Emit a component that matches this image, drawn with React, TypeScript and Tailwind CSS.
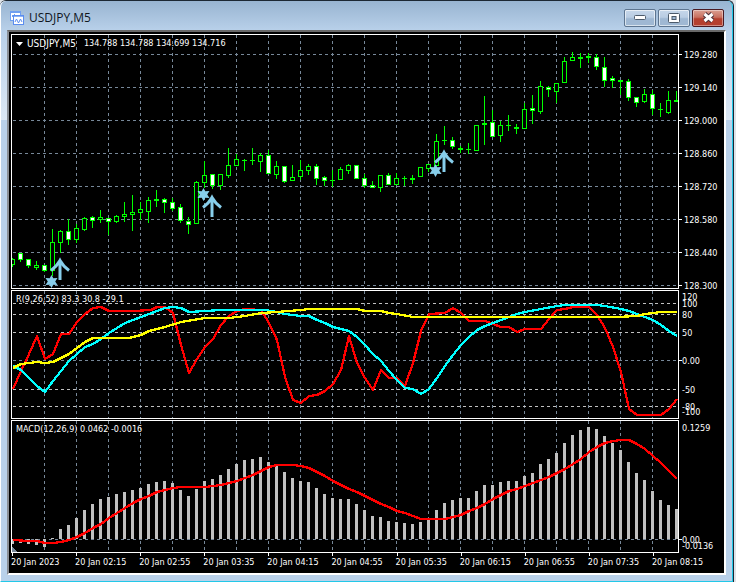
import type { ReactNode } from "react";

type CandleKind = "up" | "down";
// high, body top, body bottom, low, kind
type Candle = [number, number, number, number, CandleKind];
type Point = [number, number];

interface AxisLabel {
  text: string;
  y: number;
  tick?: boolean;
}

interface PanelProps {
  top: number;
  height: number;
  title: ReactNode;
  labels: AxisLabel[];
  indent: string;
  children: ReactNode;
}

const STEP = 8;
const FIRST_X = 12;
const LEFT = 11;
const WIDTH = 668;

const candles: Candle[] = [
  [258, 259, 264, 266, "up"], [253, 253, 259, 261, "down"], [259, 259, 265, 267, "down"], [261, 265, 267, 269, "up"],
  [265, 265, 270, 271, "down"], [229, 242, 270, 275, "up"], [230, 231, 242, 252, "up"], [219, 231, 239, 244, "down"],
  [224, 228, 239, 242, "up"], [217, 218, 229, 230, "up"], [216, 217, 220, 227, "down"], [210, 217, 219, 222, "up"],
  [218, 218, 221, 234, "down"], [215, 216, 221, 222, "up"], [202, 214, 216, 221, "up"], [195, 212, 214, 230, "up"],
  [202, 209, 212, 219, "up"], [197, 200, 211, 222, "up"], [190, 199, 200, 206, "down"], [198, 199, 202, 212, "down"],
  [198, 202, 208, 210, "down"], [204, 207, 220, 222, "down"], [217, 221, 224, 233, "down"], [181, 182, 223, 223, "up"],
  [161, 175, 182, 187, "up"], [174, 174, 185, 188, "down"], [174, 174, 185, 189, "up"], [148, 165, 175, 177, "up"],
  [154, 159, 165, 165, "up"], [159, 160, 160, 170, "up"], [148, 160, 160, 164, "up"], [153, 155, 161, 171, "up"],
  [150, 155, 173, 173, "down"], [161, 166, 174, 178, "up"], [166, 166, 181, 182, "down"], [165, 177, 180, 180, "up"],
  [160, 170, 176, 179, "up"], [164, 166, 170, 174, "up"], [164, 166, 178, 184, "down"], [176, 177, 180, 185, "down"],
  [170, 180, 180, 186, "up"], [167, 169, 179, 179, "up"], [164, 165, 170, 173, "up"], [165, 165, 178, 178, "down"],
  [174, 178, 185, 187, "down"], [181, 185, 187, 187, "down"], [175, 175, 187, 191, "up"], [173, 175, 184, 184, "down"],
  [173, 178, 184, 184, "up"], [176, 178, 178, 185, "up"], [175, 178, 179, 183, "up"], [167, 167, 176, 176, "up"],
  [164, 164, 168, 171, "up"], [134, 141, 165, 165, "up"], [126, 140, 140, 144, "up"], [137, 140, 146, 148, "down"],
  [146, 148, 149, 152, "up"], [143, 149, 149, 153, "up"], [125, 125, 150, 150, "up"], [96, 123, 124, 144, "up"],
  [110, 122, 136, 136, "down"], [121, 125, 135, 141, "up"], [115, 125, 125, 130, "up"], [124, 127, 128, 133, "up"],
  [103, 109, 128, 128, "up"], [95, 108, 110, 123, "down"], [81, 86, 111, 113, "up"], [86, 87, 89, 96, "down"],
  [83, 83, 91, 102, "up"], [57, 61, 82, 82, "up"], [52, 57, 60, 60, "up"], [53, 57, 58, 67, "up"],
  [53, 56, 57, 62, "up"], [54, 57, 66, 69, "down"], [57, 67, 80, 86, "down"], [76, 78, 80, 87, "down"],
  [80, 80, 81, 94, "up"], [79, 81, 97, 100, "down"], [97, 97, 102, 106, "down"], [89, 94, 101, 102, "up"],
  [90, 94, 108, 114, "down"], [103, 109, 109, 116, "up"], [91, 100, 112, 113, "up"], [91, 100, 101, 101, "up"],
];

const histogram = [
  544, 543, 544, 545, 547, 538, 529, 525, 518, 510, 504, 499, 497, 494, 492, 490, 488, 484, 482, 481, 483,
  490, 496, 489, 481, 479, 475, 469, 464, 460, 459, 457, 462, 466, 472, 478, 481, 482, 488, 494, 498, 499,
  499, 504, 510, 516, 517, 521, 522, 523, 524, 522, 519, 510, 503, 500, 498, 498, 491, 485, 485, 482, 481,
  481, 476, 473, 464, 459, 453, 443, 435, 430, 427, 429, 436, 443, 450, 462, 473, 480, 491, 500, 505, 509,
];

const signal: Point[] = [
  [12, 540], [28, 541], [36, 541], [44, 543], [52, 543], [60, 542], [68, 540], [76, 537], [84, 533], [92, 528],
  [100, 524], [108, 518], [116, 513], [124, 508], [132, 503], [140, 499], [148, 496], [156, 492], [164, 490],
  [172, 488], [180, 487], [204, 487], [220, 485], [236, 481], [244, 478], [252, 475], [260, 471], [268, 467],
  [276, 465], [284, 465], [292, 465], [300, 466], [308, 468], [316, 472], [324, 476], [332, 481], [340, 485],
  [348, 489], [356, 492], [364, 496], [372, 500], [380, 504], [388, 507], [396, 511], [404, 513], [412, 516],
  [420, 519], [444, 519], [452, 517], [460, 515], [468, 511], [476, 508], [484, 504], [492, 499], [500, 495],
  [508, 491], [516, 489], [524, 486], [532, 483], [540, 480], [548, 477], [556, 473], [564, 469], [572, 464],
  [580, 459], [588, 452], [596, 447], [604, 443], [612, 441], [620, 440], [628, 440], [636, 444], [644, 449],
  [652, 456], [660, 463], [668, 471], [676, 479],
];

const fast: Point[] = [
  [12, 389], [20, 371], [28, 354], [36, 336], [44, 359], [52, 354], [60, 334], [68, 334], [76, 322], [84, 314],
  [92, 308], [100, 307], [108, 311], [132, 311], [150, 310], [156, 307], [164, 307], [172, 313], [180, 345],
  [188, 373], [196, 359], [204, 347], [212, 339], [220, 325], [228, 316], [236, 311], [244, 309], [260, 310],
  [268, 323], [276, 340], [284, 377], [292, 400], [300, 403], [308, 396], [316, 395], [324, 391], [332, 384],
  [340, 370], [348, 336], [356, 363], [364, 378], [372, 390], [380, 370], [388, 378], [396, 378], [404, 386],
  [412, 363], [420, 331], [428, 314], [444, 313], [452, 308], [460, 313], [468, 321], [484, 321], [492, 324],
  [500, 327], [508, 327], [516, 332], [524, 329], [540, 329], [548, 319], [556, 310], [564, 309], [572, 307],
  [588, 307], [596, 315], [604, 328], [612, 347], [620, 372], [628, 409], [636, 415], [660, 415], [668, 409],
  [676, 399],
];

const middle: Point[] = [
  [12, 366], [20, 370], [28, 378], [36, 386], [44, 392], [52, 381], [60, 371], [68, 361], [76, 354], [84, 347],
  [92, 344], [100, 339], [108, 333], [116, 328], [124, 323], [132, 320], [140, 317], [148, 314], [156, 311],
  [164, 308], [172, 307], [180, 308], [188, 312], [204, 311], [220, 310], [264, 310], [276, 312], [284, 314],
  [300, 316], [308, 316], [316, 320], [324, 323], [332, 327], [348, 331], [356, 337], [364, 345], [372, 354],
  [380, 361], [388, 371], [396, 380], [404, 388], [412, 389], [420, 394], [428, 389], [436, 378], [444, 366],
  [452, 355], [460, 345], [468, 337], [476, 330], [484, 326], [492, 323], [500, 320], [508, 317], [516, 314],
  [524, 312], [540, 309], [556, 306], [564, 305], [596, 305], [604, 306], [620, 309], [628, 311], [636, 314],
  [644, 317], [652, 320], [660, 325], [668, 331], [676, 336],
];

const slow: Point[] = [
  [12, 368], [20, 364], [28, 363], [36, 362], [44, 363], [52, 362], [60, 358], [68, 354], [76, 348], [84, 342],
  [92, 338], [128, 338], [140, 335], [148, 331], [164, 327], [180, 322], [204, 318], [228, 318], [244, 316],
  [260, 313], [276, 312], [300, 310], [308, 309], [356, 309], [364, 311], [380, 311], [388, 313], [396, 314],
  [412, 317], [616, 317], [636, 316], [644, 314], [660, 312], [676, 312],
];

const times = [
  "20 Jan 2023", "20 Jan 02:15", "20 Jan 02:55", "20 Jan 03:35", "20 Jan 04:15", "20 Jan 04:55",
  "20 Jan 05:35", "20 Jan 06:15", "20 Jan 06:55", "20 Jan 07:35", "20 Jan 08:15",
];

const priceLabels: AxisLabel[] = [
  { text: "129.280", y: 54, tick: true },
  { text: "129.140", y: 87, tick: true },
  { text: "129.000", y: 120, tick: true },
  { text: "128.860", y: 153, tick: true },
  { text: "128.720", y: 186, tick: true },
  { text: "128.580", y: 219, tick: true },
  { text: "128.440", y: 252, tick: true },
  { text: "128.300", y: 285, tick: true },
];

const rangeLabels: AxisLabel[] = [
  { text: "120", y: 297 },
  { text: "100", y: 303 },
  { text: "80", y: 314 },
  { text: "50", y: 332 },
  { text: "0.00", y: 360, tick: true },
  { text: "-50", y: 389 },
  { text: "-80", y: 406 },
  { text: "-100", y: 411 },
];

const macdLabels: AxisLabel[] = [
  { text: "0.1259", y: 427 },
  { text: "0.00", y: 539, tick: true },
  { text: "-0.0136", y: 545 },
];

const verticals = Array.from({ length: 20 }, (_, i) => 44 + i * 32);

const HLine = ({ y, color = "#778899" }: { y: number; color?: string }) => (
  <line x1={13} x2={678} y1={y + 0.5} y2={y + 0.5} stroke={color} strokeDasharray="3 3" />
);

const Line = ({ points, color }: { points: Point[]; color: string }) => (
  <polyline
    points={points.map(([x, y]) => `${x + 1},${y}`).join(" ")}
    fill="none"
    stroke={color}
    strokeWidth={2.25}
    strokeLinejoin="round"
  />
);

const Bar = ({ candle, x }: { candle: Candle; x: number }) => {
  const [high, top, bottom, low, kind] = candle;
  return (
    <g>
      <rect x={x} y={high} width={1} height={low - high + 1} fill="#00ff00" />
      <rect x={x - 2} y={top} width={5} height={bottom - top + 1} fill="#00ff00" />
      {bottom - top > 1 && (
        <rect
          x={x - 1}
          y={top + 1}
          width={3}
          height={bottom - top - 1}
          fill={kind === "down" ? "#ffffff" : "#000000"}
        />
      )}
    </g>
  );
};

// Six pointed star with a buy arrow next to it
const Signal = ({ x, y, arrowTop }: { x: number; y: number; arrowTop: number }) => (
  <g shapeRendering="auto">
    <path
      transform={`translate(${x} ${y})`}
      d="M0 -6.5 L1.8 -3.2 L6 -3.4 L3.7 0 L6 3.4 L1.8 3.2 L0 6.5 L-1.8 3.2 L-6 3.4 L-3.7 0 L-6 -3.4 L-1.8 -3.2 Z"
      fill="#87ceeb"
    />
    <path
      transform={`translate(${x + 8.5} ${arrowTop})`}
      d="M0 1 V21 M-9 11.5 Q-3 7 0 1.5 Q3 7 9 11.5"
      fill="none"
      stroke="#87ceeb"
      strokeWidth={3}
    />
  </g>
);

const Panel = ({ top, height, title, labels, indent, children }: PanelProps) => (
  <section className="flex">
    <div className="relative min-w-0 flex-1">
      <svg
        viewBox={`${LEFT} ${top} ${WIDTH} ${height}`}
        className="block h-auto w-full"
        shapeRendering="crispEdges"
      >
        {verticals.map((x) => (
          <line
            key={x}
            x1={x + 0.5}
            x2={x + 0.5}
            y1={top + 1}
            y2={top + height}
            stroke="#778899"
            strokeDasharray="3 3"
          />
        ))}
        {children}
        <rect
          x={LEFT + 0.5}
          y={top + 0.5}
          width={WIDTH - 1}
          height={height - 1}
          fill="none"
          stroke="#ffffff"
        />
      </svg>
      <h2 className="absolute top-1 left-[5px] flex items-center whitespace-pre leading-[11px]">{title}</h2>
    </div>
    <div className="relative w-[45px]">
      {labels.map((label) => (
        <div
          key={label.text}
          className="absolute left-0 flex h-px items-center leading-[10px]"
          style={{ top: `${((label.y - top) / height) * 100}%` }}
        >
          {label.tick && <span className="absolute left-0 h-px w-[3px] bg-white" />}
          <span className={indent}>{label.text}</span>
        </div>
      ))}
    </div>
  </section>
);

const ChartIcon = () => (
  <svg width="14" height="14" viewBox="0 0 14 14" fill="none" shapeRendering="crispEdges">
    <rect x="0.5" y="0.5" width="10" height="9" rx="1" fill="#fff" stroke="#6f9ff0" />
    <path d="M1 1.5h9" stroke="#6f9ff0" />
    <path d="M2 6l1-2l1 2l1-3" stroke="#6f9ff0" />
    <rect x="3.5" y="4.5" width="10" height="9" rx="1" fill="#fff" stroke="#5b8def" />
    <path d="M4 5.5h9" stroke="#8bb2f5" />
    <path d="M5 11l1.5-3l2 4l2-4l1.5 3" stroke="#5b8def" shapeRendering="auto" />
  </svg>
);

const WindowButton = ({ label, close, children }: { label: string; close?: boolean; children: ReactNode }) => (
  <button
    aria-label={label}
    className={`flex h-[18px] w-8 items-center justify-center rounded-xs border inset-ring ${
      close
        ? "border-[#4a1a22] bg-linear-to-b from-[#dba093] from-0% via-[#c87060] via-45% to-[#b5402f] to-55% inset-ring-white/40"
        : "border-[#5d7590] bg-linear-to-b from-[#c6d7ea] from-0% via-[#b9cde3] via-45% to-[#9fb8d3] to-55% inset-ring-white/60"
    }`}
  >
    {children}
  </button>
);

const App = () => {
  return (
    <div className="min-h-screen bg-[#dfe3e8] pr-[2px] font-['DejaVu_Sans_Condensed','DejaVu_Sans',sans-serif] text-[9px] text-white">
      <div className="flex min-h-screen flex-col rounded-t-md border-t border-r border-[#1c2733] bg-[#b9d1ea]">
        <div className="flex flex-1 flex-col rounded-t-md border-r border-b border-l border-r-[#22c8e8] border-b-[#22c8e8] border-l-white bg-[linear-gradient(#98b4d1,#b9d1ea_30px,#dce8f5_119px,#b9d1ea_119px)] px-1.5 pb-1.5">
          <header className="flex h-[29px] items-center justify-between pt-1 pr-[2px] pl-[3px]">
            <div className="flex items-center gap-[5px]">
              <ChartIcon />
              <h1 className="font-['Open_Sans',sans-serif] text-[12px] leading-4 text-[#10161e]">USDJPY,M5</h1>
            </div>
            <div className="flex gap-[2px]">
              <WindowButton label="Minimize">
                <svg width="12" height="6" viewBox="0 0 12 6">
                  <rect x="0.5" y="0.5" width="11" height="4" rx="1" fill="#fff" stroke="#4c5b6b" />
                </svg>
              </WindowButton>
              <WindowButton label="Maximize">
                <svg width="12" height="10" viewBox="0 0 12 10">
                  <rect x="0.5" y="0.5" width="11" height="9" rx="1" fill="#fff" stroke="#4c5b6b" />
                  <rect x="4" y="3.5" width="4" height="3" fill="#9fb8d3" stroke="#4c5b6b" />
                </svg>
              </WindowButton>
              <WindowButton label="Close" close>
                <svg width="13" height="11" viewBox="0 0 13 11">
                  <path d="M2.5 2L10.5 9M10.5 2L2.5 9" stroke="#4a3038" strokeWidth="5" />
                  <path d="M2.5 2L10.5 9M10.5 2L2.5 9" stroke="#fff" strokeWidth="3" />
                </svg>
              </WindowButton>
            </div>
          </header>

          <main className="flex flex-1 flex-col border-2 border-t-[#696969] border-r-white border-b-white border-l-[#8a8f96] bg-black pt-[2px] pl-[2px]">
            <div className="flex flex-col gap-px">
              <Panel
                top={34}
                height={255}
                labels={priceLabels}
                indent="pl-[5px]"
                title={
                  <>
                    <svg width="7" height="4" viewBox="0 0 7 4" className="mr-1">
                      <path d="M0 0h7L3.5 4z" fill="#fff" />
                    </svg>
                    <span className="mr-2 text-[10px]">USDJPY,M5</span>
                    <span>134.788 134.788 134.699 134.716</span>
                  </>
                }
              >
                {priceLabels.map((label) => (
                  <HLine key={label.text} y={label.y} />
                ))}
                {candles.map((candle, i) => (
                  <Bar key={i} candle={candle} x={FIRST_X + i * STEP} />
                ))}
                <Signal x={51.5} y={281.5} arrowTop={259} />
                <Signal x={203.5} y={194.5} arrowTop={196} />
                <Signal x={435.5} y={170.5} arrowTop={151} />
              </Panel>

              <Panel
                top={290}
                height={129}
                labels={rangeLabels}
                indent="pl-[3px]"
                title="R(9,26,52) 83.3 30.8 -29.1"
              >
                {[303, 314, 332, 389, 406].map((y) => (
                  <HLine key={y} y={y} color="#c0c0c0" />
                ))}
                <HLine y={360} />
                <Line points={fast} color="#ff0000" />
                <Line points={middle} color="#00ffff" />
                <Line points={slow} color="#ffff00" />
              </Panel>

              <Panel
                top={420}
                height={133}
                labels={macdLabels}
                indent="pl-[3px]"
                title="MACD(12,26,9) 0.0462 -0.0016"
              >
                <HLine y={539} />
                {histogram.map((y, i) => (
                  <rect
                    key={i}
                    x={FIRST_X + i * STEP - 1}
                    y={Math.min(y, 539)}
                    width={3}
                    height={Math.abs(539 - y)}
                    fill="#c0c0c0"
                  />
                ))}
                <path d="M12 547L17 552H12Z" fill="#778899" />
                <Line points={signal} color="#ff0000" />
              </Panel>
            </div>

            <ol className="mr-2 grid h-5 grid-cols-11">
              {times.map((time) => (
                <li key={time} className="whitespace-nowrap leading-[10px]">
                  <span className="ml-px block h-[3px] w-px bg-white" />
                  <span className="block pt-px">{time}</span>
                </li>
              ))}
            </ol>
          </main>
        </div>
      </div>
    </div>
  );
};

export default App;
